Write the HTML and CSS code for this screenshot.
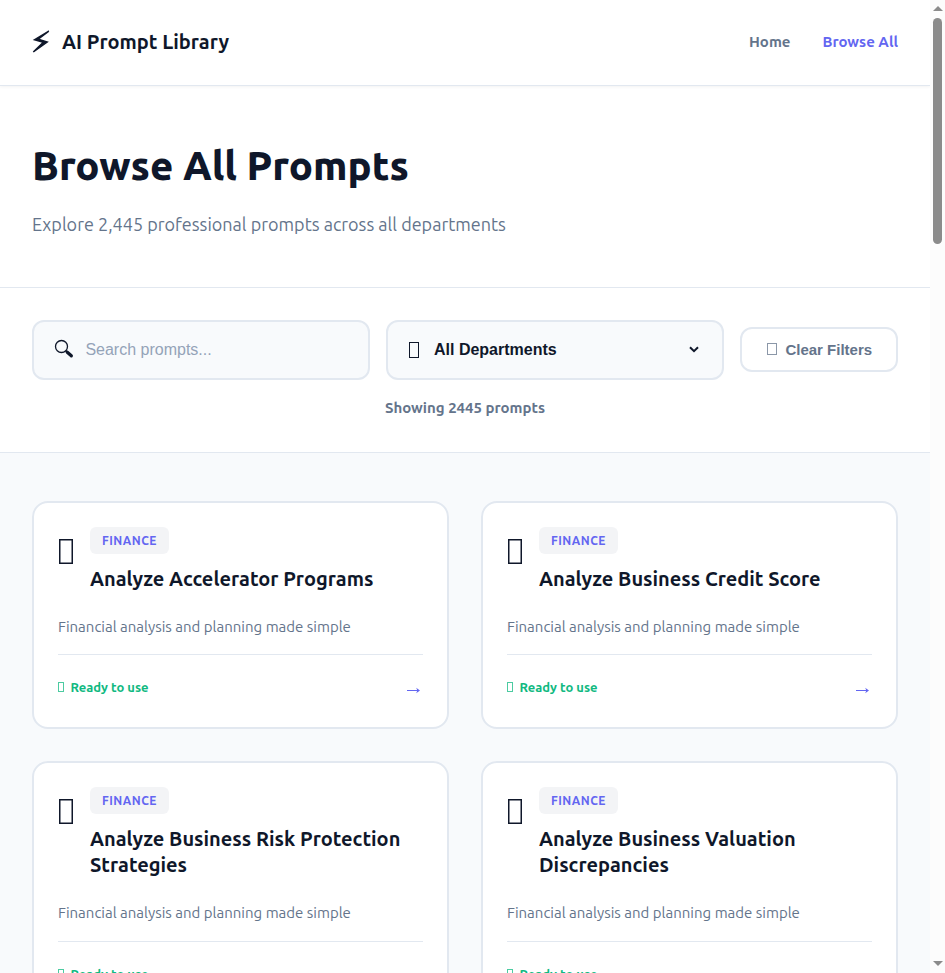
FILE: index.html
```
<!DOCTYPE html>
<html lang="en">
<head>
<meta charset="utf-8">
<title>AI Prompt Library</title>
<link rel="stylesheet" href="styles.css">
</head>
<body>
<div class="page">
  <header class="header">
    <div class="brand">
      <svg class="bolt" width="18" height="24" viewBox="0 0 18 24"><path d="M16.8 1.2 2.6 9.8 11.3 12.2 1.3 22 15.2 12 6.2 9.1Z" fill="#0f172a" stroke="#0f172a" stroke-width="1.5"/></svg>
      <span class="brand-name">AI Prompt Library</span>
    </div>
    <nav class="nav"><a class="home">Home</a><a class="active">Browse All</a></nav>
  </header>
  <section class="hero">
    <h1><span>Browse All Prompts</span></h1>
    <p><span>Explore 2,445 professional prompts across all departments</span></p>
  </section>
  <section class="filters">
    <div class="controls">
      <div class="field">
        <svg class="search-icon" width="20" height="20" viewBox="0 0 20 20"><circle cx="7.5" cy="7.5" r="6" fill="none" stroke="#0f172a" stroke-width="1.3"/><path d="M11.8 11.8 13.5 13.3" stroke="#0f172a" stroke-width="2"/><path d="M13.3 13.3 17.3 16.8" stroke="#0f172a" stroke-width="3.3" stroke-linecap="round"/></svg>
        <span class="placeholder">Search prompts...</span>
      </div>
      <div class="field select">
        <i class="box box-select"></i>
        <span class="selected">All Departments</span>
        <svg class="chevron" width="10" height="7" viewBox="0 0 10 7"><path d="M1 1.2 5 5.2 9 1.2" fill="none" stroke="#0f172a" stroke-width="2"/></svg>
      </div>
      <div class="clear"><i class="box box-clear"></i><span>Clear Filters</span></div>
    </div>
    <div class="count"><span>Showing 2445 prompts</span></div>
  </section>
  <main class="grid">
    <article class="card">
      <div class="card-head"><i class="box box-card"></i><div><span class="tag">FINANCE</span><h2>Analyze Accelerator Programs</h2></div></div>
      <p class="desc">Financial analysis and planning made simple</p>
      <div class="card-foot"><i class="box box-ready"></i><span class="ready">Ready to use</span><svg class="arrow" width="14" height="8" viewBox="0 0 14 8"><path d="M0 4.5H11" fill="none" stroke="#6366f1" stroke-width="1"/><path d="M9.2 1.8 13 4.5 9.2 7.2 10.3 4.5Z" fill="#6366f1"/></svg></div>
    </article>
    <article class="card">
      <div class="card-head"><i class="box box-card"></i><div><span class="tag">FINANCE</span><h2>Analyze Business Credit Score</h2></div></div>
      <p class="desc">Financial analysis and planning made simple</p>
      <div class="card-foot"><i class="box box-ready"></i><span class="ready">Ready to use</span><svg class="arrow" width="14" height="8" viewBox="0 0 14 8"><path d="M0 4.5H11" fill="none" stroke="#6366f1" stroke-width="1"/><path d="M9.2 1.8 13 4.5 9.2 7.2 10.3 4.5Z" fill="#6366f1"/></svg></div>
    </article>
    <article class="card">
      <div class="card-head"><i class="box box-card"></i><div><span class="tag">FINANCE</span><h2>Analyze Business Risk Protection<br>Strategies</h2></div></div>
      <p class="desc">Financial analysis and planning made simple</p>
      <div class="card-foot"><i class="box box-ready"></i><span class="ready">Ready to use</span></div>
    </article>
    <article class="card">
      <div class="card-head"><i class="box box-card"></i><div><span class="tag">FINANCE</span><h2>Analyze Business Valuation<br>Discrepancies</h2></div></div>
      <p class="desc">Financial analysis and planning made simple</p>
      <div class="card-foot"><i class="box box-ready"></i><span class="ready">Ready to use</span></div>
    </article>
  </main>
</div>
<div class="scrollbar"><i class="up"></i><i class="thumb"></i><i class="down"></i></div>
</body>
</html>
```
FILE: styles.css
```
* { box-sizing: border-box; margin: 0; padding: 0; }
body { display: flex; height: 973px; overflow: hidden; background: #f8fafc; color: #0f172a; font-family: Ubuntu, "Noto Sans", sans-serif; }
.page { width: 930px; height: 973px; overflow: hidden; }
svg, .box { flex: none; display: block; }
span, h2 { white-space: nowrap; }
.header { height: 86px; padding: 0 32px 2px; display: flex; justify-content: space-between; align-items: center; background: #fff; border-bottom: 1px solid #e2e8f0; box-shadow: 0 1px 3px rgba(0,0,0,.05); position: relative; }
.brand { display: flex; align-items: center; gap: 12px; }
.brand-name { font-size: 20px; font-weight: 600; line-height: 28px; }
.nav { display: flex; gap: 32px; font-size: 15px; font-weight: 600; line-height: 24px; color: #64748b; }
.nav .active { color: #6366f1; }
.hero { height: 202px; padding: 54px 32px 0; background: #fff; border-bottom: 1px solid #e2e8f0; }
.hero h1 { font-size: 40px; font-weight: 800; line-height: 52px; }
.hero p { margin-top: 17px; font-size: 18px; font-weight: 400; line-height: 30px; color: #64748b; }
.filters { height: 165px; padding: 32px 32px 0; background: #fff; border-bottom: 1px solid #e2e8f0; }
.controls { display: grid; grid-template-columns: 338px 338px 158px; gap: 16px; align-items: center; font-family: "Liberation Sans", sans-serif; }
.field { height: 60px; border: 2px solid #e2e8f0; border-radius: 12px; background: #f8fafc; display: flex; align-items: center; padding: 0 20px; font-size: 16px; }
.search-icon { margin-top: -2px; }
.placeholder { color: #94a3b8; margin-left: 11.4px; }
.selected { font-weight: 700; margin-left: 15px; }
.chevron { margin-left: auto; margin-right: 3px; margin-top: -1px; }
.clear { height: 45px; margin-bottom: 1px; border: 2px solid #e2e8f0; border-radius: 12px; display: flex; align-items: center; padding-left: 25px; color: #64748b; font-size: 15px; font-weight: 700; }
.box { border: 1px solid currentColor; }
.box-select { width: 10px; height: 16px; margin: -1px 0 0 1px; }
.box-clear { width: 10px; height: 12px; margin: -1px 8.4px 0 0; opacity: .75; }
.box-card { width: 14px; height: 25px; margin: 12px 17px 0 1px; border-width: 1px; box-shadow: inset 0 0 0 .5px #0f172a; }
.box-ready { width: 6px; height: 10px; margin-right: 6.4px; opacity: .75; }
.count { margin-top: 16px; text-align: center; font-size: 15px; font-weight: 600; line-height: 24px; color: #64748b; }
.grid { padding: 48px 32px; display: grid; grid-template-columns: 417px 417px; gap: 32px; }
.card { border: 2px solid #e2e8f0; border-radius: 16px; background: #fff; padding: 24px; }
.card-head { display: flex; align-items: flex-start; }
.tag { display: flex; justify-content: center; align-items: center; width: 79px; height: 27px; border-radius: 6px; background: #f3f4f6; color: #6366f1; font-size: 12px; font-weight: 600; letter-spacing: .5px; }
h2 { margin-top: 12px; font-size: 20px; font-weight: 600; line-height: 26px; }
.desc { margin-top: 22px; white-space: nowrap; font-size: 15px; font-weight: 400; line-height: 25px; color: #64748b; }
.card-foot { margin-top: 15.4px; height: 49px; border-top: 1px solid #e2e8f0; padding-top: 16px; display: flex; align-items: center; color: #10b981; font-size: 13px; font-weight: 600; }
.arrow { margin: 5px 2px 0 auto; }
.scrollbar { width: 15px; height: 973px; background: #fcfcfc; display: flex; flex-direction: column; align-items: center; }
.up, .down { width: 0; height: 0; border: 5px solid transparent; flex: none; }
.up { margin-top: 1px; border-bottom-color: #8b8b8b; border-top-width: 5px; }
.thumb { margin-top: 7px; width: 9px; height: 226px; border-radius: 5px; background: #8b8b8b; }
.down { margin-top: auto; margin-bottom: 7px; border-top-color: #8b8b8b; border-bottom-width: 0; }
```
